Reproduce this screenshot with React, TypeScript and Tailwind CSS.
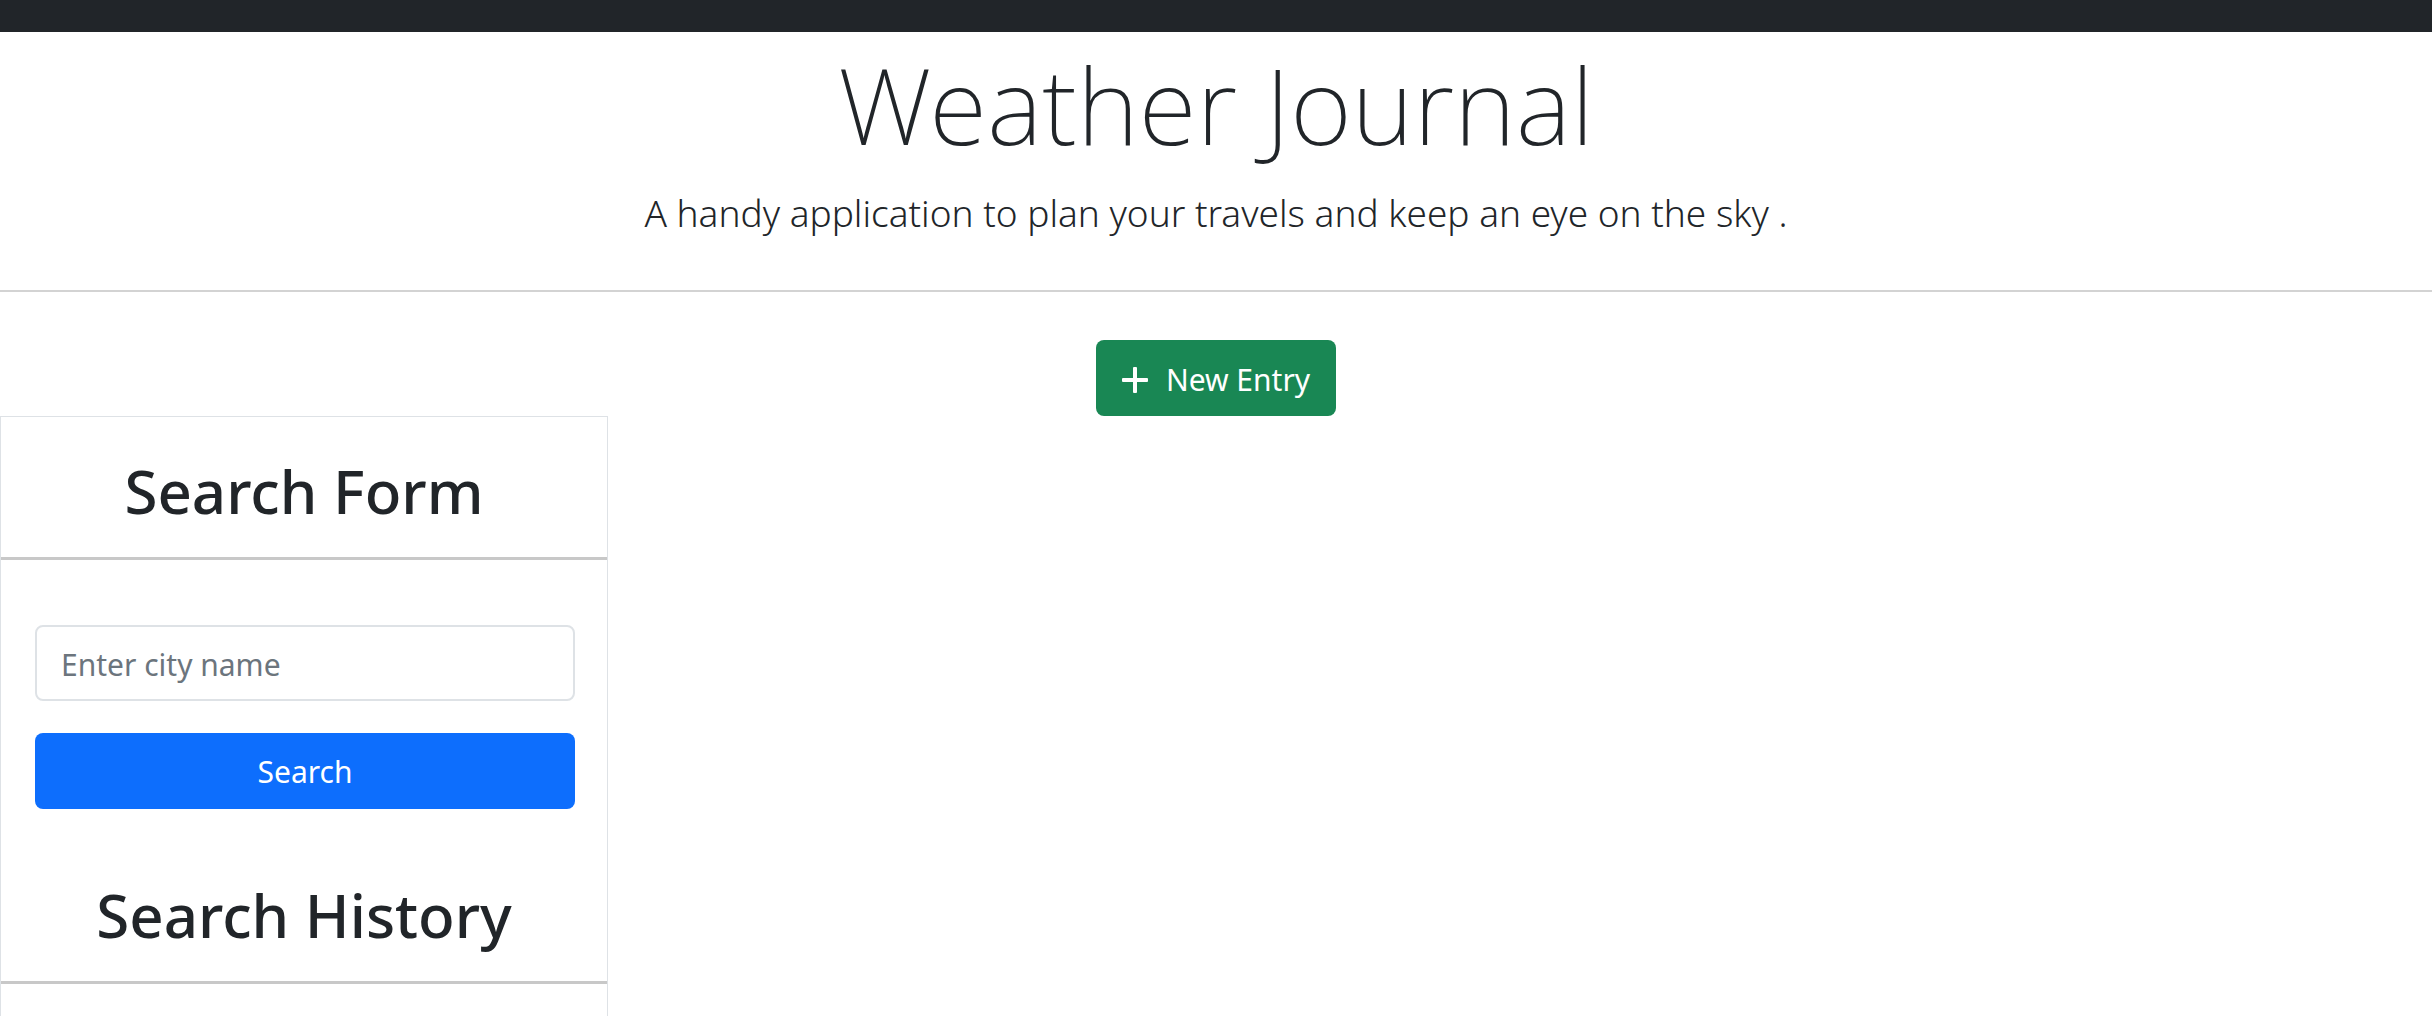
import React from "react";

function SectionTitle({ children }: { children: React.ReactNode }) {
  return (
    <h2 className="border-b-3 border-[#c8c8c8] pb-7 text-center text-[60px] leading-[76px] font-medium">
      {children}
    </h2>
  );
}

export default function App() {
  return (
    <div className="flex min-h-screen flex-col bg-white font-['Noto_Sans','Open_Sans',sans-serif] text-[#212529]">
      <nav className="h-8 bg-[#212529]" aria-label="Main" />
      <header className="border-b-2 border-[#d3d3d3] pt-1 pb-12 text-center">
        <h1 className="text-[106px] leading-[136px] font-extralight">Weather Journal</h1>
        <p className="mt-3 text-[37px] leading-[58px] font-light">
          A handy application to plan your travels and keep an eye on the sky .
        </p>
      </header>
      <main className="flex grow flex-col">
        <div className="flex justify-center pt-12">
          <button
            type="button"
            className="flex h-[76px] items-center gap-[18px] rounded-lg bg-[#198754] px-[26px] pt-1 text-[30px] leading-[48px] text-white"
          >
            <svg viewBox="0 0 26 26" className="size-[26px]" fill="currentColor" aria-hidden="true">
              <rect x="11" width="4" height="26" rx="1" />
              <rect y="11" width="26" height="4" rx="1" />
            </svg>
            New Entry
          </button>
        </div>
        <aside className="w-1/4 grow border-x border-t border-[#dee2e6] pt-9">
          <SectionTitle>Search Form</SectionTitle>
          <form className="flex flex-col gap-8 pt-[65px] pr-8 pb-[68px] pl-[34px]" onSubmit={(e) => e.preventDefault()}>
            <input
              type="text"
              aria-label="City name"
              placeholder="Enter city name"
              className="h-[76px] w-full rounded-lg border-2 border-[#dee2e6] px-6 pt-0.5 text-[30px] leading-[48px] placeholder:text-[#6c757d]"
            />
            <button type="submit" className="h-[76px] w-full rounded-lg bg-[#0d6efd] pt-0.5 text-[30px] leading-[48px] text-white">
              Search
            </button>
          </form>
          <SectionTitle>Search History</SectionTitle>
        </aside>
      </main>
    </div>
  );
}
